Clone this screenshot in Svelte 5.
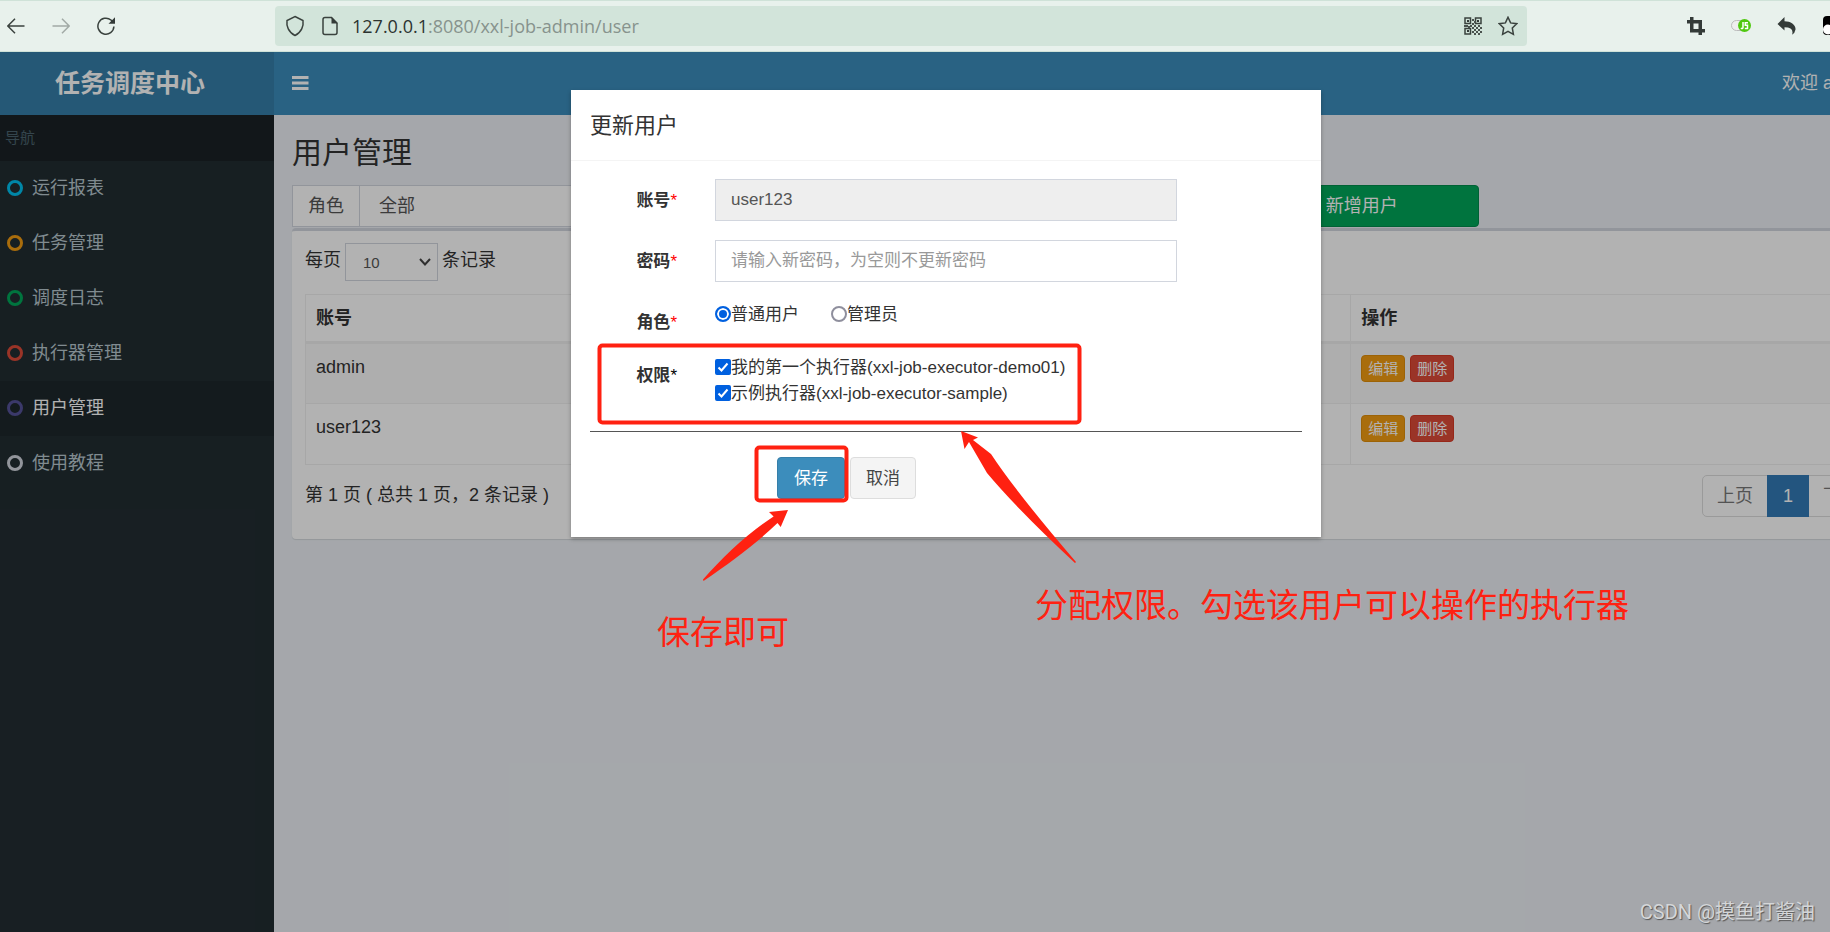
<script>
  const menu = [
    { name: '运行报表', color: '#00c0ef' },
    { name: '任务管理', color: '#f39c12' },
    { name: '调度日志', color: '#00a65a' },
    { name: '执行器管理', color: '#dd4b39' },
    { name: '用户管理', color: '#555299', active: true },
    { name: '使用教程', color: '#d2d6de' }
  ];
  const users = ['admin', 'user123'];

  let role = $state('normal');
  let jobs = $state([
    { id: 'demo01', label: '我的第一个执行器(xxl-job-executor-demo01)', checked: true },
    { id: 'sample', label: '示例执行器(xxl-job-executor-sample)', checked: true }
  ]);

  // Dark cells of the small QR icon, on an 18x18 grid.
  const qr = [
    [8, 2], [10, 4], [8, 6], [10, 8], [2, 8], [4, 9], [6, 8], [8, 10], [12, 10], [14, 8], [16, 10],
    [10, 12], [14, 12], [8, 14], [12, 14], [16, 14], [10, 16], [14, 16], [0, 8]
  ];
</script>

<div class="window">
  <div class="toolbar">
    <div class="nav-buttons">
      <button aria-label="后退">
        <svg width="18" height="18" viewBox="0 0 18 18"><path d="M17.500 9H1M8 1.800L.8 9L8 16.200" /></svg>
      </button>
      <button aria-label="前进" class="dim">
        <svg width="18" height="18" viewBox="0 0 18 18"><path d="M.5 9H17M10 1.800L17.200 9L10 16.200" /></svg>
      </button>
      <button aria-label="刷新">
        <svg width="18" height="18" viewBox="0 0 18 18"><path d="M16.900 9.500A8 8 0 1 1 14 3L15.500 4.500" /><path class="solid" d="M18 .3V6.800H11.500Z" /></svg>
      </button>
    </div>
    <div class="address">
      <svg width="20" height="22" viewBox="0 0 20 22"><path d="M10 1.500L18 5.500C18.800 11 16.500 17.500 10 20.500C3.500 17.500 1.200 11 2 5.500Z" /></svg>
      <svg class="page-icon" width="16" height="20" viewBox="0 0 16 20"><path d="M9.500 1.500H3Q1 1.500 1 3.500V16.500Q1 18.500 3 18.500H13Q15 18.500 15 16.500V7Z" /><path class="solid" d="M9.500 1L15.500 7.500H9.500Z" /></svg>
      <span class="url"><b>127.0.0.1</b>:8080/xxl-job-admin/user</span>
      <svg class="qr" width="18" height="18" viewBox="0 0 18 18">
        <path d="M1 1H6.500V6.500H1ZM11.500 1H17V6.500H11.500ZM1 11.500H6.500V17H1Z" />
        <path class="solid" d="M3 3H5V5H3ZM13 3H15V5H13ZM3 13H5V15H3Z" />
        {#each qr as [x, y]}<rect {x} {y} width="2" height="2" />{/each}
      </svg>
      <svg class="star" width="20" height="20" viewBox="0 0 20 20"><path d="M10 1.300L12.600 6.900L18.700 7.700L14.300 12L15.400 18.300L10 15.300L4.600 18.300L5.700 12L1.300 7.700L7.400 6.900Z" /></svg>
    </div>
    <div class="extensions">
      <svg width="18" height="18" viewBox="0 0 18 18"><path class="solid" d="M3 0H6.500V3H15V12H18V15.500H15V18H11.500V15.500H3V6.500H0V3H3ZM6.500 6.500V12H11.500V6.500Z" fill-rule="evenodd" /></svg>
      <svg class="script-switch" width="20" height="18" viewBox="0 0 20 18">
        <rect x=".5" y="3.500" width="16" height="10" rx="5" />
        <circle cx="13.500" cy="8.500" r="6.500" />
        <path d="M12 5V10.500Q12 12 9.800 11.300M17 5.700H14.300V8.300H16.500V11.500H13.800" />
      </svg>
      <svg width="20" height="18" viewBox="0 0 20 18"><path class="solid" d="M7.500 0V4.200C14 4.200 19 8 18.500 12.500Q18 16 15 17.800Q17.500 10.500 7.500 10.300V13.500L.5 7Z" /></svg>
      <svg class="badge" width="20" height="20" viewBox="0 0 20 20"><rect width="20" height="19" rx="4" fill="#000" /><circle cx="5" cy="13.500" r="5" fill="#fff" /></svg>
    </div>
  </div>

  <div class="shell">
    <header>
      <div class="brand">任务调度中心</div>
      <nav class="navbar">
        <button class="toggle" aria-label="切换导航">
          <svg width="17" height="14" viewBox="0 0 17 14"><path d="M0 1.500H16.500M0 7H16.500M0 12.500H16.500" /></svg>
        </button>
        <a class="welcome" href="#user">欢迎 admin</a>
      </nav>
    </header>

    <div class="main">
      <aside>
        <div class="nav-title">导航</div>
        <ul>
          {#each menu as item}
            <li class:active={item.active}>
              <a href="#menu"><i style="border-color: {item.color}"></i>{item.name}</a>
            </li>
          {/each}
        </ul>
      </aside>

      <section class="content">
        <h1>用户管理</h1>
        <div class="filters">
          <div class="group">
            <label for="filter-role">角色</label>
            <select id="filter-role"><option>全部</option></select>
          </div>
          <button class="add">新增用户</button>
        </div>
        <div class="box">
          <div class="length">
            <label for="page-size">每页</label>
            <select id="page-size"><option>10</option></select>
            <span>条记录</span>
          </div>
          <table>
            <thead>
              <tr><th>账号</th><th></th><th>操作</th></tr>
            </thead>
            <tbody>
              {#each users as user}
                <tr>
                  <td>{user}</td>
                  <td></td>
                  <td>
                    <div class="ops">
                      <button class="edit">编辑</button>
                      <button class="remove">删除</button>
                    </div>
                  </td>
                </tr>
              {/each}
            </tbody>
          </table>
          <div class="table-foot">
            <span>第 1 页 ( 总共 1 页，2 条记录 )</span>
            <div class="pages">
              <a href="#prev">上页</a><a class="current" href="#1">1</a><a href="#next">下页</a>
            </div>
          </div>
        </div>
      </section>
    </div>

    <div class="backdrop">
      <div class="modal" role="dialog" aria-labelledby="modal-title">
        <h4 id="modal-title">更新用户</h4>
        <form>
          <div class="row">
            <label class="name" for="account">账号<em>*</em></label>
            <input id="account" class="field" type="text" value="user123" readonly />
          </div>
          <div class="row">
            <label class="name" for="password">密码<em>*</em></label>
            <input id="password" class="field" type="text" placeholder="请输入新密码，为空则不更新密码" />
          </div>
          <div class="row roles">
            <span class="name">角色<em>*</em></span>
            <div class="radios">
              <label><input type="radio" name="role" value="normal" bind:group={role} />普通用户</label>
              <label><input type="radio" name="role" value="admin" bind:group={role} />管理员</label>
            </div>
          </div>
          <div class="row">
            <span class="name">权限<em class="black">*</em></span>
            <div>
              {#each jobs as job (job.id)}
                <label class="job"><input type="checkbox" bind:checked={job.checked} />{job.label}</label>
              {/each}
            </div>
          </div>
          <hr />
          <div class="actions">
            <button type="button" class="save">保存</button>
            <button type="button" class="cancel">取消</button>
          </div>
        </form>

        <div class="notes">
          <svg width="520" height="500" viewBox="0 0 520 500">
            <rect x="28.500" y="255.500" width="480" height="77" rx="3" />
            <rect x="185.500" y="357.500" width="90" height="53" rx="3" />
            <path d="M217 420L209.700 437L206.500 433C186 453 160 472 132.500 491L132 489.500C153 466 176 444 202.600 426.500L198 422Z" />
            <path d="M390 341L407 347.500L402 350L420 364Q445 402 505 472L504 473Q447 420 416 383L398 352L393.500 359Z" />
          </svg>
          <span class="note save-note">保存即可</span>
          <span class="note perm-note">分配权限。勾选该用户可以操作的执行器</span>
        </div>
      </div>
    </div>
  </div>
  <div class="watermark">CSDN @摸鱼打酱油</div>
</div>

<style>
  :global(body) {
    margin: 0;
  }
  * {
    box-sizing: border-box;
  }
  .window {
    position: relative;
    display: flex;
    flex-direction: column;
    min-height: 100vh;
    overflow: hidden;
    font-family: 'Liberation Sans', 'Noto Sans CJK SC', sans-serif;
    font-size: 18px;
    line-height: 25px;
    color: #333;
  }
  button,
  input,
  select {
    font: inherit;
    color: inherit;
    margin: 0;
  }
  button {
    cursor: pointer;
  }
  a {
    color: inherit;
    text-decoration: none;
  }

  /* browser toolbar */
  .toolbar {
    display: flex;
    align-items: center;
    height: 52px;
    background: #e8f1ec;
    border-top: 1px solid #cfe2d8;
    border-bottom: 1px solid #cfe2d8;
  }
  .toolbar svg {
    display: block;
    flex: none;
    fill: none;
    stroke: #3a423e;
    stroke-width: 1.5;
  }
  .toolbar .solid,
  .qr rect,
  .badge rect,
  .badge circle {
    stroke: none;
  }
  .toolbar .solid {
    fill: #343b38;
  }
  .nav-buttons {
    display: flex;
    gap: 27px;
    width: 275px;
    padding-left: 7px;
  }
  .nav-buttons button {
    padding: 0;
    border: 0;
    background: none;
  }
  .nav-buttons .dim {
    opacity: 0.4;
  }
  .address {
    display: flex;
    align-items: center;
    flex: 1;
    height: 40px;
    padding: 0 9px 0 10px;
    background: #d2e4da;
    border-radius: 4px;
  }
  .page-icon {
    margin-left: 17px;
  }
  .url {
    flex: 1;
    margin-left: 14px;
    font-family: 'Open Sans', 'Noto Sans', sans-serif;
    font-size: 18px;
    color: #87938d;
  }
  .url b {
    font-weight: 400;
    color: #2c3330;
  }
  .qr rect {
    fill: #4a524e;
  }
  .star {
    margin-left: 16px;
  }
  .extensions {
    display: flex;
    align-items: center;
    gap: 26px;
    width: 303px;
    padding-left: 160px;
  }
  .script-switch rect {
    fill: #eee;
    stroke: #bbb;
    stroke-width: 1;
  }
  .script-switch circle {
    fill: #4fc80f;
    stroke: none;
  }
  .script-switch path {
    stroke: #fff;
  }

  /* application */
  .shell {
    position: relative;
    display: flex;
    flex-direction: column;
    flex: 1;
    width: calc(100% + 76px);
  }
  header {
    display: flex;
    height: 63px;
    color: #fff;
  }
  .brand {
    width: 274px;
    padding-right: 14px;
    background: #367fa9;
    font-size: 25px;
    font-weight: 700;
    line-height: 63px;
    text-align: center;
  }
  .navbar {
    display: flex;
    align-items: center;
    justify-content: space-between;
    flex: 1;
    padding: 0 34px 0 18px;
    background: #3c8dbc;
  }
  .toggle {
    padding: 0 0 2px;
    border: 0;
    background: none;
  }
  .toggle svg {
    display: block;
    stroke: #fff;
    stroke-width: 3;
  }
  .main {
    display: flex;
    flex: 1;
  }
  aside {
    width: 274px;
    background: #222d32;
    color: #b8c7ce;
  }
  .nav-title {
    height: 46px;
    padding-left: 5px;
    background: #1a2226;
    color: #4b646f;
    font-size: 15px;
    line-height: 46px;
  }
  ul {
    margin: 0;
    padding: 0;
    list-style: none;
  }
  li a {
    display: flex;
    align-items: center;
    gap: 9px;
    height: 55px;
    padding-left: 7px;
  }
  li i {
    width: 16px;
    height: 16px;
    margin-bottom: 2px;
    border: 3px solid;
    border-radius: 50%;
  }
  li.active {
    background: #1e282c;
    color: #fff;
  }
  .content {
    flex: 1;
    min-width: 0;
    padding: 21px 19px 0 18px;
    background: #ecf0f5;
  }
  h1 {
    margin: 0 0 16px;
    font-size: 30px;
    font-weight: 400;
    line-height: 33px;
  }
  .filters {
    display: grid;
    grid-template-columns: repeat(12, 1fr);
    column-gap: 38px;
    height: 43px;
  }
  .group {
    display: flex;
    grid-column: 1 / span 3;
    height: 42px;
    background: #fff;
    border: 1px solid #d2d6de;
    color: #555;
  }
  .group label {
    padding: 8px 15px 7px 15px;
    border-right: 1px solid #d2d6de;
  }
  .group select {
    flex: 1;
    padding: 1px 19px 0;
    appearance: none;
    background: none;
    border: 0;
  }
  .add {
    grid-column: 8 / span 2;
    height: 42px;
    background: #00a65a;
    border: 1px solid #008d4c;
    border-radius: 4px;
    color: #fff;
  }
  .box {
    height: 311px;
    padding: 12px 13px;
    background: #fff;
    border-top: 3px solid #d2d6de;
    border-radius: 4px;
    box-shadow: 0 1px 1px rgba(0, 0, 0, 0.1);
  }
  .length {
    display: flex;
    gap: 4px;
    height: 51px;
  }
  .length label,
  .length span {
    padding-top: 5px;
  }
  .length select {
    width: 93px;
    height: 38px;
    padding: 0 17px;
    appearance: none;
    background: url("data:image/svg+xml,%3Csvg xmlns='http://www.w3.org/2000/svg' width='12' height='8'%3E%3Cpath d='M1 1L6 6.500L11 1' fill='none' stroke='%23444' stroke-width='2'/%3E%3C/svg%3E") no-repeat right 6px center;
    border: 1px solid #d2d6de;
    border-radius: 0;
    color: #555;
    font-size: 15px;
  }
  table {
    width: 100%;
    table-layout: fixed;
    border-collapse: collapse;
  }
  th,
  td {
    padding: 11px 10px 9px;
    border: 1px solid #f0f0f0;
    text-align: left;
    vertical-align: top;
  }
  th {
    height: 48px;
    border-bottom-width: 3px;
  }
  td {
    height: 61px;
  }
  tbody tr:nth-child(odd) {
    background: #f9f9f9;
  }
  .ops {
    display: flex;
    gap: 5px;
  }
  .ops button {
    height: 27px;
    padding: 0 6px;
    border: 1px solid #e08e0b;
    border-radius: 4px;
    background: #f39c12;
    color: #fff;
    font-size: 15px;
    line-height: 24px;
  }
  .ops .remove {
    background: #dd4b39;
    border-color: #d73925;
  }
  .table-foot {
    display: flex;
    justify-content: space-between;
    padding-top: 10px;
  }
  .table-foot > span {
    padding-top: 8px;
  }
  .pages {
    display: flex;
    height: 42px;
    border: 1px solid #ddd;
    border-radius: 5px;
    color: #777;
    line-height: 40px;
  }
  .pages a {
    padding: 0 14px;
  }
  .pages .current {
    margin: -1px 0;
    padding: 1px 16px;
    background: #337ab7;
    color: #fff;
  }

  /* dialog */
  .backdrop {
    position: absolute;
    inset: 0;
    padding: 38px 14px 0 0;
    background: rgba(0, 0, 0, 0.3);
  }
  .modal {
    position: relative;
    width: 750px;
    margin: 0 auto;
    background: #fff;
    box-shadow: 0 2px 4px rgba(0, 0, 0, 0.3);
    font-size: 17px;
  }
  h4 {
    margin: 0;
    padding: 21px 19px 19px;
    border-bottom: 1px solid #f4f4f4;
    font-size: 22px;
    font-weight: 400;
    line-height: 30px;
  }
  form {
    display: flex;
    flex-direction: column;
    gap: 19px;
    padding: 18px 19px 38px;
  }
  .row {
    display: grid;
    grid-template-columns: 87px 462px;
    column-gap: 38px;
  }
  .name {
    padding-top: 9px;
    font-weight: 700;
    text-align: right;
    white-space: nowrap;
  }
  .name em {
    color: red;
    font-style: normal;
    font-weight: 400;
  }
  .name .black {
    color: #000;
  }
  .field {
    height: 42px;
    padding: 0 15px;
    background: #fff;
    border: 1px solid #d2d6de;
    border-radius: 0;
    color: #555;
  }
  .field:read-only {
    background: #eee;
  }
  .field::placeholder {
    color: #999;
    opacity: 1;
  }
  .radios {
    display: flex;
    gap: 32px;
  }
  .radios label,
  .job {
    display: flex;
    align-items: center;
    height: 26px;
    white-space: nowrap;
  }
  .radios input,
  .job input {
    width: 16px;
    height: 16px;
    appearance: none;
    border: 2px solid #8f8f9d;
    border-radius: 50%;
    background: #fff;
  }
  .radios input:checked {
    border-color: #0060df;
    background: #0060df;
    box-shadow: inset 0 0 0 2px #fff;
  }
  .job input {
    border-radius: 2px;
  }
  .job input:checked {
    border-color: #0060df;
    background: #0060df url("data:image/svg+xml,%3Csvg xmlns='http://www.w3.org/2000/svg' width='12' height='12'%3E%3Cpath d='M1.500 6.500L4.500 9.500L10.500 2.500' fill='none' stroke='white' stroke-width='2'/%3E%3C/svg%3E") no-repeat center;
  }
  hr {
    width: 100%;
    margin: 6px 0;
    border: 0;
    border-top: 1px solid #555;
  }
  .actions {
    display: flex;
    gap: 5px;
    padding-left: 187px;
  }
  .actions button {
    height: 42px;
    padding: 0 16px;
    border: 1px solid #367fa9;
    border-radius: 4px;
    background: #3c8dbc;
    color: #fff;
  }
  .actions .cancel {
    padding: 0 15px;
    border-color: #ddd;
    background: #f4f4f4;
    color: #444;
  }

  /* hand-drawn notes over the dialog */
  .notes {
    position: absolute;
    inset: 0;
    pointer-events: none;
  }
  .notes svg {
    position: absolute;
    top: 0;
    left: 0;
    fill: #ff2111;
  }
  .notes rect {
    fill: none;
    stroke: #ff2111;
    stroke-width: 4;
  }
  .note {
    position: absolute;
    color: #ff2111;
    font-size: 33px;
    line-height: 40px;
    white-space: nowrap;
  }
  .save-note {
    top: 523px;
    left: 86px;
  }
  .perm-note {
    top: 496px;
    left: 464px;
  }
  .watermark {
    position: absolute;
    right: 15px;
    bottom: 7px;
    color: #d4d6d8;
    font-family: Roboto, 'Noto Sans CJK SC', sans-serif;
    font-size: 20px;
    text-shadow: 1px 1px 1px #555;
  }
</style>
